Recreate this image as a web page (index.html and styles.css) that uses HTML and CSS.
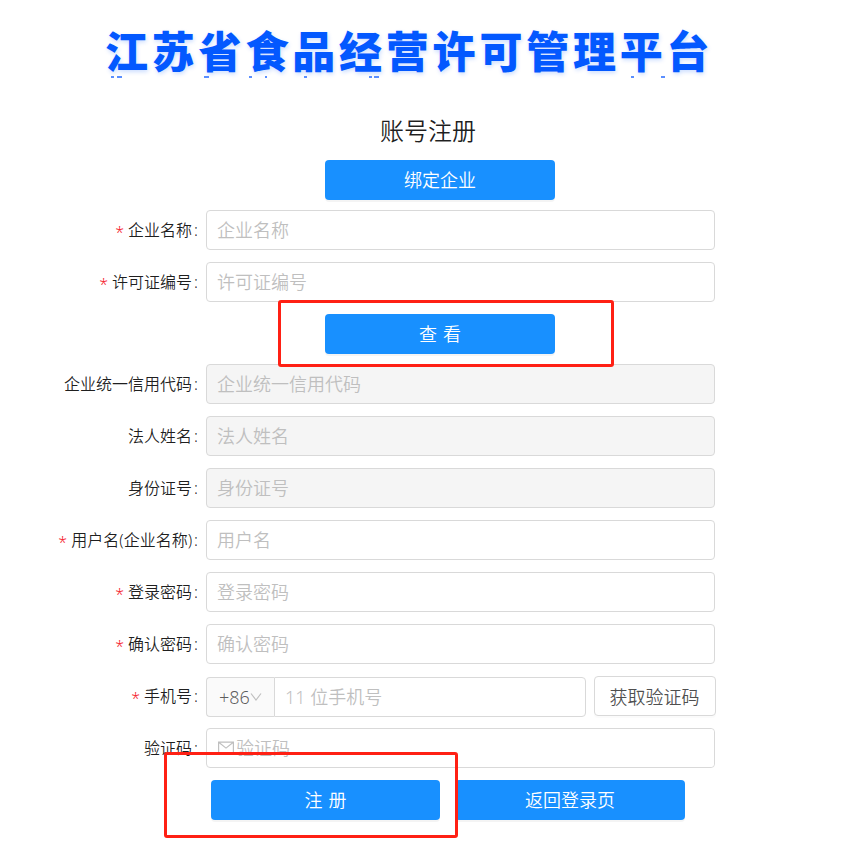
FILE: index.html
```
<!DOCTYPE html>
<html lang="zh-CN">
<head>
  <meta charset="utf-8">
  <title>账号注册</title>
  <link rel="stylesheet" href="styles.css">
</head>
<body>
  <div class="page">
    <h1 class="logo">江苏省食品经营许可管理平台</h1>
    <svg class="logo-edge" width="640" height="2" viewBox="90 0 640 2">
      <path d="M111 1h3M117 1h5M204 1h5M249 1h3M265 1h2M304 1h3M369 1h3M374 1h5M631 1h3M661 1h4" stroke="#5b8fff" stroke-width="2"/>
    </svg>

    <h2 class="title">账号注册</h2>

    <form class="form">
      <div class="center">
        <button type="button" class="btn">绑定企业</button>
      </div>
      <div class="row">
        <label class="required" for="company">企业名称</label>
        <input type="text" id="company" placeholder="企业名称">
      </div>
      <div class="row">
        <label class="required" for="license">许可证编号</label>
        <input type="text" id="license" placeholder="许可证编号">
      </div>
      <div class="center check">
        <button type="button" class="btn spaced">查看</button>
        <div class="mark mark-check"></div>
      </div>
      <div class="row">
        <label for="credit">企业统一信用代码</label>
        <input type="text" id="credit" placeholder="企业统一信用代码" disabled>
      </div>
      <div class="row">
        <label for="legal">法人姓名</label>
        <input type="text" id="legal" placeholder="法人姓名" disabled>
      </div>
      <div class="row">
        <label for="idcard">身份证号</label>
        <input type="text" id="idcard" placeholder="身份证号" disabled>
      </div>
      <div class="row">
        <label class="required" for="user">用户名(企业名称)</label>
        <input type="text" id="user" placeholder="用户名">
      </div>
      <div class="row">
        <label class="required" for="pwd">登录密码</label>
        <input type="password" id="pwd" placeholder="登录密码">
      </div>
      <div class="row">
        <label class="required" for="pwd2">确认密码</label>
        <input type="password" id="pwd2" placeholder="确认密码">
      </div>
      <div class="row">
        <label class="required" for="phone">手机号</label>
        <div class="phone">
          <div class="prefix">
            <span>+86</span>
            <svg width="12" height="10" viewBox="0 0 12 10" fill="none" stroke="#bfbfbf" stroke-width="1.2">
              <path d="M1 1.5l5 6.5 5-6.5"/>
            </svg>
          </div>
          <input type="text" id="phone" placeholder="11 位手机号">
        </div>
        <button type="button" class="btn-code">获取验证码</button>
      </div>
      <div class="row">
        <label for="code">验证码</label>
        <div class="code">
          <svg width="16" height="14" viewBox="0 0 16 14" fill="none" stroke="#bfbfbf" stroke-width="1.2">
            <path d="M.6 1.1h14.8v11.8H.6zM1 1.5l7 5.6 7-5.6"/>
          </svg>
          <input type="text" id="code" placeholder="验证码">
        </div>
      </div>
      <div class="actions">
        <button type="submit" class="btn spaced">注册</button>
        <button type="button" class="btn">返回登录页</button>
        <div class="mark mark-submit"></div>
      </div>
    </form>
  </div>
</body>
</html>
```

FILE: styles.css
```
* {
  box-sizing: border-box;
}

body {
  margin: 0;
  background-color: #fff;
  font-family: "Noto Sans", "Noto Sans CJK SC", sans-serif;
  font-weight: 350;
  color: rgba(0, 0, 0, 0.88);
}

.page {
  width: 866px;
  height: 867px;
  padding-top: 24px;
  overflow: hidden;
}

.logo {
  margin: 0 0 0 105px;
  height: 52px;
  line-height: 51px;
  font-family: "Noto Sans CJK SC", sans-serif;
  font-size: 43px;
  font-weight: 900;
  letter-spacing: 3.8px;
  white-space: nowrap;
  color: #0358ff;
  text-shadow: 1px 2px 4px rgba(3, 88, 255, 0.2);
}

.logo-edge {
  display: block;
  margin-left: 90px;
}

.title {
  margin: 36px 0 10px 380px;
  height: 36px;
  line-height: 34px;
  font-size: 24px;
  font-weight: 350;
}

.form {
  position: relative;
}

.row {
  display: flex;
  height: 40px;
  margin-bottom: 12px;
}

label {
  width: 206px;
  padding-right: 8px;
  line-height: 40px;
  font-size: 16px;
  text-align: right;
  white-space: nowrap;
}

label::after {
  content: ":";
  margin-left: 2px;
}

.required::before {
  content: "*";
  display: inline-block;
  margin-right: 4px;
  line-height: 1;
  vertical-align: -2px;
  color: #f5222d;
}

input {
  width: 509px;
  height: 40px;
  padding: 0 10px;
  border: 1px solid #d9d9d9;
  border-radius: 4px;
  background-color: #fff;
  font-family: inherit;
  font-size: 18px;
  font-weight: 350;
  outline: none;
}

input::placeholder {
  color: #bfbfbf;
}

input:disabled {
  background-color: #f5f5f5;
}

.btn {
  width: 230px;
  height: 40px;
  padding: 0 0 2px;
  border: none;
  border-radius: 4px;
  background-color: #1890ff;
  box-shadow: 0 2px 0 rgba(0, 0, 0, 0.045);
  font-family: inherit;
  font-size: 18px;
  font-weight: 350;
  color: #fff;
  cursor: pointer;
}

.spaced {
  letter-spacing: 6px;
  text-indent: 6px;
}

.center {
  margin: 0 0 10px 325px;
  height: 40px;
}

.check {
  position: relative;
}

.phone {
  display: flex;
  width: 380px;
  margin: 1px 8px 0 0;
}

.prefix {
  display: flex;
  align-items: center;
  width: 68px;
  height: 40px;
  padding-left: 12px;
  border: 1px solid #d9d9d9;
  border-right: none;
  border-radius: 4px 0 0 4px;
  background-color: #fafafa;
  font-size: 18px;
  color: rgba(0, 0, 0, 0.65);
}

.phone input {
  width: 312px;
  border-radius: 0 4px 4px 0;
}

.btn-code {
  width: 122px;
  height: 40px;
  padding: 0 1px 1px 0;
  border: 1px solid #d9d9d9;
  border-radius: 4px;
  background-color: #fff;
  box-shadow: 0 2px 0 rgba(0, 0, 0, 0.015);
  font-family: inherit;
  font-size: 18px;
  font-weight: 350;
  color: rgba(0, 0, 0, 0.7);
  cursor: pointer;
}

.code {
  display: flex;
  align-items: center;
  width: 509px;
  padding-left: 11px;
  border: 1px solid #d9d9d9;
  border-radius: 4px;
}

.code input {
  flex: 1;
  width: auto;
  height: 38px;
  padding: 0 0 0 2px;
  border: none;
}

.actions {
  position: relative;
  display: flex;
  gap: 15px;
  margin-left: 211px;
}

.actions .spaced {
  width: 229px;
}

/* red boxes over the two steps */
.mark {
  position: absolute;
  border: 3px solid #ff2014;
  border-radius: 3px;
  pointer-events: none;
}

.mark-check {
  left: -47px;
  top: -14px;
  width: 336px;
  height: 67px;
}

.mark-submit {
  left: -47px;
  top: -28px;
  width: 294px;
  height: 86px;
}
```
